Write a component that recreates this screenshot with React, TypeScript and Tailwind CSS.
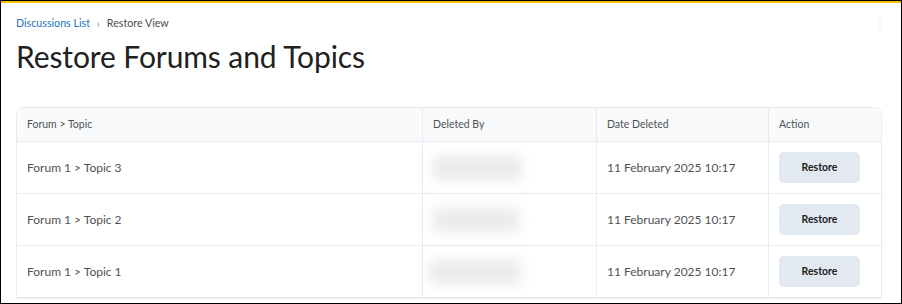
import React from 'react';

const rows = [
  { name: 'Forum 1 > Topic 3', date: '11 February 2025 10:17', blur: 'ml-[9px] w-[90px]' },
  { name: 'Forum 1 > Topic 2', date: '11 February 2025 10:17', blur: 'ml-[10px] w-[86px]' },
  { name: 'Forum 1 > Topic 1', date: '11 February 2025 10:17', blur: 'ml-[6px] w-[92px]' },
];

const App: React.FC = () => {
  return (
    <div
      className="w-[902px] h-[304px] overflow-hidden bg-black p-[1px]"
      style={{ fontFamily: 'Lato, "Noto Sans", sans-serif' }}
    >
      <div className="h-full bg-white flex flex-col overflow-hidden">
        <div className="h-[2px] bg-[#f2c200] shrink-0" />
        <div className="px-[15px] relative flex-1">
          <div className="absolute right-[19px] top-[12px] w-[4px] h-[18px] rounded bg-[#f8f9fa]" />
          <nav className="mt-[13px] flex items-center text-[10.7px] leading-[14px]">
            <span className="text-[#1b75bc]">Discussions List</span>
            <span className="mx-[7px] text-[#6e7376] text-[10px]">›</span>
            <span className="text-[#494c4e]">Restore View</span>
          </nav>
          <h1 className="mt-[8px] text-[30px] leading-[36px] text-[#202122] tracking-[-0.1px]">
            Restore Forums and Topics
          </h1>
          <div className="mt-[33px] w-[866px] border border-[#e8ecf2] rounded-t-[7px] text-[#4f5255]">
            <div className="grid grid-cols-[405px_174px_172px_1fr] h-[34px] bg-[#f9fafc] text-[10.5px] rounded-t-[7px] border-b border-[#e8ecf2]">
              <div className="pl-[10px] flex items-center">Forum &gt; Topic</div>
              <div className="pl-[10px] flex items-center border-l border-[#e8ecf2]">Deleted By</div>
              <div className="pl-[10px] flex items-center border-l border-[#e8ecf2]">Date Deleted</div>
              <div className="pl-[10px] flex items-center border-l border-[#e8ecf2]">Action</div>
            </div>
            {rows.map((r, i) => (
              <div
                key={i}
                className="grid grid-cols-[405px_174px_172px_1fr] h-[52px] text-[12px] border-b border-[#e8ecf2]"
              >
                <div className="pl-[10px] flex items-center">{r.name}</div>
                <div className="flex items-center border-l border-[#e8ecf2]">
                  <div className={`${r.blur} h-[24px] rounded bg-[#ebebeb] blur-[6px]`} />
                </div>
                <div className="pl-[10px] flex items-center border-l border-[#e8ecf2]">{r.date}</div>
                <div className="pl-[10px] flex items-center border-l border-[#e8ecf2]">
                  <button className="w-[81px] h-[31px] rounded-[5px] bg-[#e3e9f1] text-[10.5px] font-bold text-[#202122]">
                    Restore
                  </button>
                </div>
              </div>
            ))}
          </div>
        </div>
      </div>
    </div>
  );
};

export default App;
